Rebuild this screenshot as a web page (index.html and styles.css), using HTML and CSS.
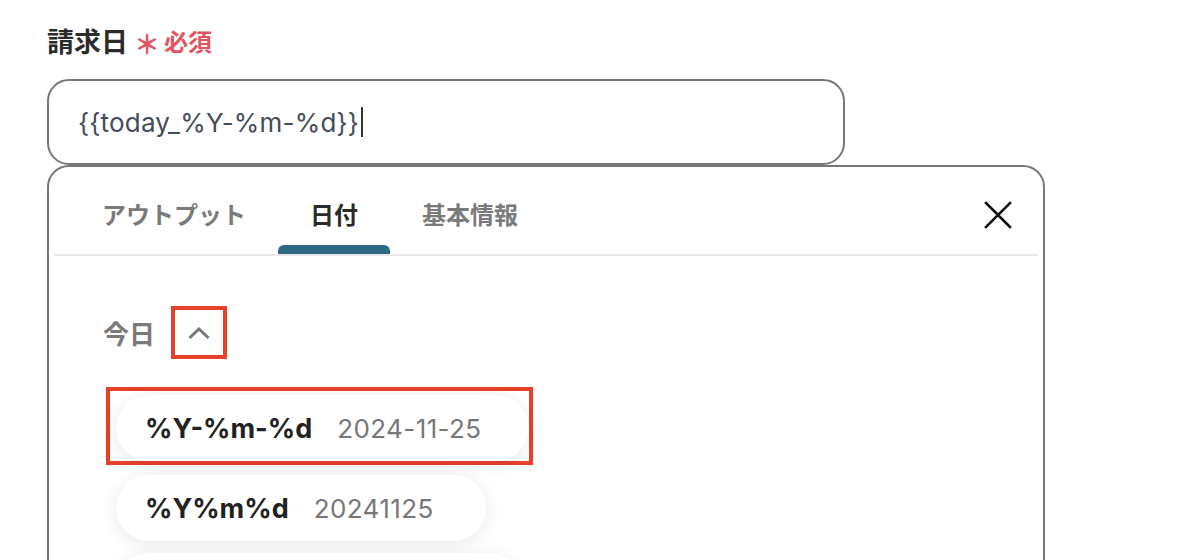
FILE: index.html
```html
<!DOCTYPE html>
<html lang="ja">
<head>
<meta charset="utf-8">
<title>請求日</title>
<link rel="stylesheet" href="styles.css">
</head>
<body>
<div class="page">
  <div class="field-label">
    <span class="label-text">請求日</span>
    <span class="required"><span class="asterisk">＊</span>必須</span>
  </div>
  <div class="input">
    <span class="input-text">{{today_%Y-%m-%d}}</span><span class="caret"></span>
  </div>
  <div class="panel">
    <div class="tabs">
      <div class="tab"><span class="tab-label">アウトプット</span><span class="tab-indicator"></span></div>
      <div class="tab active"><span class="tab-label">日付</span><span class="tab-indicator"></span></div>
      <div class="tab"><span class="tab-label">基本情報</span><span class="tab-indicator"></span></div>
      <button class="close" aria-label="閉じる">
        <svg width="28" height="28" viewBox="0 0 28 28"><path d="M2 2 L26 26 M26 2 L2 26" stroke="#111" stroke-width="2.6" stroke-linecap="square" fill="none"/></svg>
      </button>
    </div>
    <div class="panel-body">
      <div class="group-head">
        <span class="group-title">今日</span>
        <button class="toggle" aria-label="折りたたむ">
          <svg width="24" height="14" viewBox="0 0 24 14"><path d="M2.5 12 L12 3 L21.5 12" stroke="#777" stroke-width="3" fill="none"/></svg>
        </button>
      </div>
      <div class="options">
        <div class="highlight">
          <div class="pill"><span class="pill-key">%Y-%m-%d</span><span class="pill-value">2024-11-25</span></div>
        </div>
        <div class="pill second"><span class="pill-key">%Y%m%d</span><span class="pill-value">20241125</span></div>
        <div class="pill third"><span class="pill-key">%Y/%m/%d</span><span class="pill-value">2024/11/25</span></div>
      </div>
    </div>
  </div>
</div>
</body>
</html>
```
FILE: styles.css
```css
html, body {
  margin: 0;
  padding: 0;
  background: #fff;
  overflow: hidden;
}
body {
  font-family: "Inter", "Noto Sans CJK JP", sans-serif;
  color: #2b2b2b;
}
.page {
  padding: 22px 0 0 47px;
  width: 998px;
}
.field-label {
  display: flex;
  align-items: center;
  height: 36px;
}
.label-text {
  font-family: "Noto Sans CJK JP", sans-serif;
  font-size: 27px;
  font-weight: 700;
  color: #2b2b2b;
}
.required {
  display: flex;
  align-items: center;
  margin-left: 6px;
  font-family: "Noto Sans CJK JP", sans-serif;
  font-size: 24px;
  font-weight: 700;
  color: #e5535e;
}
.asterisk {
  font-size: 26px;
  margin-right: 4px;
  position: relative;
  top: 2px;
}
.input {
  margin-top: 21px;
  box-sizing: border-box;
  width: 798px;
  height: 86px;
  border: 2px solid #777;
  border-radius: 22px;
  display: flex;
  align-items: center;
  padding-left: 29px;
}
.input-text {
  font-size: 26px;
  color: #454c57;
  letter-spacing: 0.2px;
}
.caret {
  width: 2px;
  height: 30px;
  background: #333;
  margin-left: 2px;
}
.panel {
  box-sizing: border-box;
  width: 998px;
  height: 440px;
  border: 2px solid #777;
  border-radius: 22px 22px 0 0;
  padding: 0 5px;
}
.tabs {
  display: flex;
  height: 87px;
  border-bottom: 2px solid #e8e8e8;
  padding-left: 16px;
}
.tab {
  display: flex;
  flex-direction: column;
  justify-content: space-between;
  align-items: stretch;
}
.tab-label {
  margin-top: 31px;
  padding: 0 32px;
  line-height: 32px;
  font-family: "Noto Sans CJK JP", sans-serif;
  font-size: 24px;
  font-weight: 700;
  color: #7a7a7a;
}
.tab.active .tab-label {
  color: #2b2b2b;
}
.tab-indicator {
  height: 9px;
  border-radius: 6px 6px 0 0;
}
.tab.active .tab-indicator {
  background: #2e6882;
}
.close {
  margin: 34px 26px 0 auto;
  align-self: flex-start;
  padding: 0;
  border: 0;
  background: none;
  width: 28px;
  height: 28px;
  display: flex;
}
.panel-body {
  padding-left: 49px;
}
.group-head {
  margin-top: 50px;
  display: flex;
  align-items: center;
}
.group-title {
  font-family: "Noto Sans CJK JP", sans-serif;
  font-size: 26px;
  font-weight: 700;
  color: #7a7a7a;
}
.toggle {
  margin-left: 16px;
  box-sizing: border-box;
  width: 56px;
  height: 53px;
  border: 4px solid #e8412a;
  background: #fff;
  padding: 0;
  display: flex;
  align-items: center;
  justify-content: center;
}
.options {
  margin-top: 28px;
  margin-left: 13px;
  display: flex;
  flex-direction: column;
  align-items: flex-start;
}
.highlight {
  margin-left: -10px;
  border: 4px solid #e8412a;
  padding: 4px 0 0 6px;
  display: flex;
}
.pill {
  box-sizing: border-box;
  height: 66px;
  border-radius: 33px;
  background: #fff;
  box-shadow: 0 3px 18px rgba(0, 0, 0, 0.09);
  display: flex;
  align-items: center;
  gap: 25px;
  padding: 0 47px 0 29px;
}
.pill.second {
  margin-top: 10px;
  padding-right: 52px;
}
.pill.third {
  margin-top: 12px;
}
.pill-key {
  font-size: 27px;
  font-weight: 700;
  color: #222;
}
.pill-value {
  font-size: 26px;
  letter-spacing: 0.4px;
  color: #777;
}
```
